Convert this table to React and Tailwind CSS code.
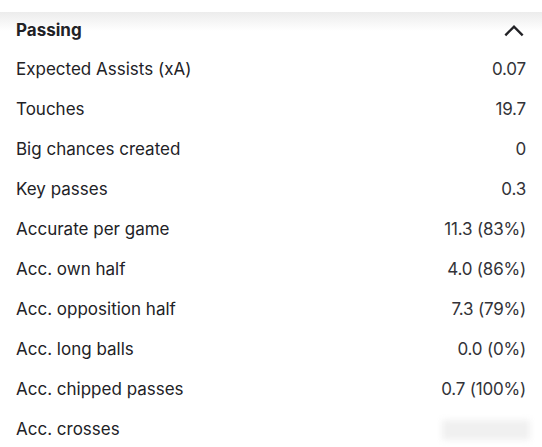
import React from "react";

const rows = [
  ["Expected Assists (xA)", "0.07"],
  ["Touches", "19.7"],
  ["Big chances created", "0"],
  ["Key passes", "0.3"],
  ["Accurate per game", "11.3 (83%)"],
  ["Acc. own half", "4.0 (86%)"],
  ["Acc. opposition half", "7.3 (79%)"],
  ["Acc. long balls", "0.0 (0%)"],
  ["Acc. chipped passes", "0.7 (100%)"],
  ["Acc. crosses", null],
];

const App = () => {
  return (
    <div
      className="w-[542px] h-[447px] overflow-hidden bg-white text-[#222226]"
      style={{ fontFamily: "Inter, 'Noto Sans', sans-serif" }}
    >
      <div className="h-3 bg-white" />

      {/* HEADER */}
      <div className="h-[38px] flex items-center justify-between px-4 bg-gradient-to-b from-[#ececec] via-white to-white">
        <span className="text-[17px] font-bold">Passing</span>
        <svg width="26" height="26" viewBox="0 0 24 24" className="-mr-[1px]">
          <path
            d="M4 16 L12 8 L20 16"
            fill="none"
            stroke="#222226"
            strokeWidth="2.2"
          />
        </svg>
      </div>

      {/* ROWS */}
      <div className="flex flex-col">
        {rows.map(([label, value]) => (
          <div key={label} className="h-10 flex items-center justify-between px-4">
            <span className="text-[17px]">{label}</span>
            {value ? (
              <span className="text-[17px] tracking-[-0.2px] text-[#333338]">{value}</span>
            ) : (
              <div className="w-[88px] h-[20px] bg-[#f0f0f0] blur-[3px] -mr-1" />
            )}
          </div>
        ))}
      </div>
    </div>
  );
};

export default App;
